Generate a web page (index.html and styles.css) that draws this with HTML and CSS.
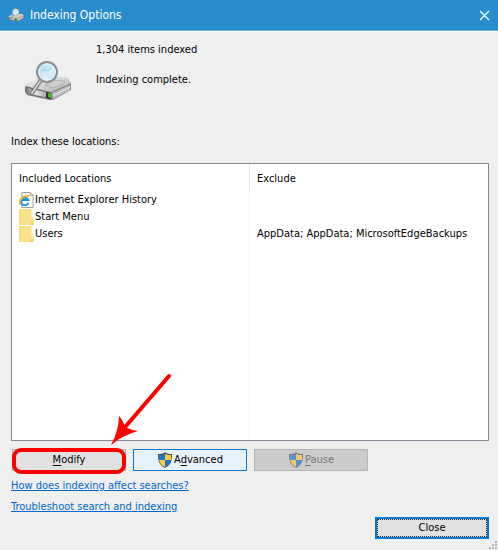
FILE: index.html
```html
<!DOCTYPE html>
<html lang="en">
<head>
    <meta charset="UTF-8">
    <meta name="viewport" content="width=device-width, initial-scale=1.0">
    <title>Indexing Options</title>
    <link rel="stylesheet" href="styles.css">
</head>
<body>
    <svg width="0" height="0" class="symbols" aria-hidden="true">
        <defs>
            <linearGradient id="metal" x1="0" y1="0" x2="1" y2="1">
                <stop offset="0" stop-color="#fafafa"/>
                <stop offset="1" stop-color="#adadad"/>
            </linearGradient>
            <linearGradient id="side" x1="0" y1="0" x2="1" y2="0">
                <stop offset="0" stop-color="#777"/>
                <stop offset="0.4" stop-color="#e4e4e4"/>
                <stop offset="1" stop-color="#888"/>
            </linearGradient>
            <linearGradient id="lens" x1="0" y1="0" x2="1" y2="1">
                <stop offset="0" stop-color="#a9d8f3"/>
                <stop offset="0.6" stop-color="#d9f0fc"/>
                <stop offset="1" stop-color="#b4dcf2"/>
            </linearGradient>
        </defs>
        <symbol id="drive" viewBox="0 0 48 40">
            <path d="M1 25 L17 16 L43 17 L47 22 L47 29 L29 39 L25 39 L3 34 L1 31 Z" fill="#8a8a8a"/>
            <path d="M1 25 L17 16 L43 17 L47 22 L27 31 Z" fill="url(#metal)"/>
            <path d="M21 24 L30 19 L40 20 L41 22 L29 27 Z" fill="#cfcfcf" stroke="#b0b0b0"/>
            <path d="M2 26 L27 32 L27 38 L4 33 L2 31 Z" fill="url(#side)" stroke="#6c6c6c"/>
            <path d="M28 32 L46 24 L46 29 L29 38 Z" fill="#bdbdbd"/>
            <path d="M29 35 L46 26" stroke="#eee"/>
            <path d="M22 31 L27 32 L27 38 L22 37 Z" fill="#333"/>
            <path d="M24 32 L27 32 L27 37 L24 36 Z" fill="#35c30b"/>
            <path d="M17 19 L8 32" stroke="#777" stroke-width="4" stroke-linecap="round"/>
            <path d="M17 19 L8 32" stroke="#d0d0d0" stroke-width="2" stroke-linecap="round"/>
            <circle cx="23" cy="11" r="10" fill="url(#lens)" stroke="#8b8f94" stroke-width="2"/>
            <circle cx="23" cy="11" r="8" fill="none" stroke="#eaf7fd"/>
            <path d="M17 10 L20 8 L23 10 L28 7" fill="none" stroke="#9fd0ee"/>
        </symbol>
        <symbol id="folder" viewBox="0 0 14 16">
            <path d="M0 0 H12 V8 L14 10 V16 H0 Z" fill="#fde08a"/>
            <path d="M0 0 H1 V16 H0 Z M11 9 H14 V16 H11 Z" fill="#f5cd5c"/>
            <path d="M11 9 L14 9 V12 L12 14 Z" fill="#fbe9ae"/>
        </symbol>
        <symbol id="shield" viewBox="0 0 16 16">
            <path d="M8 0 C10 2 12 2 15 2 C15 9 14 13 8 16 C2 13 1 9 1 2 C4 2 6 2 8 0 Z" fill="#4c4f54"/>
            <path d="M8 2 V8 H2 C2 6 2 5 2 3 C4 3 6 3 8 2 Z" fill="#1976cf"/>
            <path d="M8 2 C10 3 12 3 14 3 C14 5 14 6 14 8 H8 Z" fill="#ffcb3a"/>
            <path d="M2 8 H8 V15 C4 13 3 11 2 8 Z" fill="#ffcb3a"/>
            <path d="M8 8 H14 C13 11 12 13 8 15 Z" fill="#1976cf"/>
        </symbol>
    </svg>

    <div class="dialog">
        <header class="titlebar">
            <svg class="titlebar-icon" aria-hidden="true"><use href="#drive"/></svg>
            <h1 class="title">Indexing Options</h1>
            <button type="button" class="window-close" aria-label="Close window">
                <svg width="11" height="11" viewBox="0 0 11 11"><path d="M1 1 L10 10 M10 1 L1 10" stroke="#fff" stroke-width="1.2"/></svg>
            </button>
        </header>

        <main class="content">
            <section class="status">
                <svg class="status-icon" aria-hidden="true"><use href="#drive"/></svg>
                <div class="status-text">
                    <p>1,304 items indexed</p>
                    <p>Indexing complete.</p>
                </div>
            </section>

            <h2 class="list-label" id="locations-label">Index these locations:</h2>
            <div class="list-box">
                <table class="locations" aria-labelledby="locations-label">
                    <thead>
                        <tr><th>Included Locations</th><th>Exclude</th></tr>
                    </thead>
                    <tbody>
                        <tr>
                            <td>
                                <div class="place">
                                    <svg class="place-icon" viewBox="0 0 16 16" aria-hidden="true">
                                        <path d="M3 0 H12 L15 3 V16 H3 Z" fill="#fff" stroke="#999"/>
                                        <path d="M12 0 V3 H15" fill="#e8e8e8" stroke="#999"/>
                                        <path d="M10 11 A4 4 0 1 1 10 8 H3" fill="none" stroke="#1b8fe0" stroke-width="2"/>
                                        <path d="M1 13 C-1 8 5 2 11 4" fill="none" stroke="#f5b722" stroke-width="2"/>
                                    </svg>
                                    <span>Internet Explorer History</span>
                                </div>
                            </td>
                            <td></td>
                        </tr>
                        <tr>
                            <td><div class="place"><svg class="place-icon" aria-hidden="true"><use href="#folder"/></svg><span>Start Menu</span></div></td>
                            <td></td>
                        </tr>
                        <tr>
                            <td><div class="place"><svg class="place-icon" aria-hidden="true"><use href="#folder"/></svg><span>Users</span></div></td>
                            <td>AppData; AppData; MicrosoftEdgeBackups</td>
                        </tr>
                    </tbody>
                </table>
                <div class="list-fill"><span></span><span></span></div>
            </div>

            <div class="actions">
                <div class="marked">
                    <button type="button" class="button"><span><u>M</u>odify</span></button>
                    <span class="ring"></span>
                    <svg class="arrow" width="64" height="74" viewBox="0 0 64 74" aria-hidden="true">
                        <path d="M59 3 L16 53" stroke="#f00" stroke-width="4" stroke-linecap="round"/>
                        <path d="M1 72 Q9 57 9 43 Q13 47 15 54 Q21 57 28 58 Q13 62 1 72 Z" fill="#f00"/>
                    </svg>
                </div>
                <button type="button" class="button button-hot"><svg class="shield" aria-hidden="true"><use href="#shield"/></svg><span>A<u>d</u>vanced</span></button>
                <button type="button" class="button" disabled><svg class="shield" aria-hidden="true"><use href="#shield"/></svg><span><u>P</u>ause</span></button>
            </div>

            <nav class="links">
                <a href="#">How does indexing affect searches?</a>
                <a href="#">Troubleshoot search and indexing</a>
            </nav>

            <footer class="footer">
                <button type="button" class="button button-default"><span>Close</span></button>
            </footer>
        </main>

        <svg class="grip" width="8" height="8" viewBox="0 0 8 8" aria-hidden="true">
            <path d="M6 0h2v2h-2z M3 3h2v2h-2z M6 3h2v2h-2z M0 6h2v2h-2z M3 6h2v2h-2z M6 6h2v2h-2z" fill="#b8b8b8"/>
        </svg>
    </div>
</body>
</html>
```

FILE: styles.css
```css
* {
    box-sizing: border-box;
}

body {
    margin: 0;
    background: #efefef;
    color: #000;
    font-family: Tahoma, "DejaVu Sans Condensed", "Noto Sans", sans-serif;
    font-size: 11px;
    line-height: 16px;
}

.symbols {
    position: absolute;
}

.dialog {
    position: relative;
    display: flex;
    flex-direction: column;
    min-height: 100vh;
}

.titlebar {
    display: flex;
    align-items: center;
    gap: 6px;
    height: 31px;
    padding: 0 8px;
    background: #288dcd;
    border-bottom: 1px solid #67afdc;
    color: #fff;
}

.titlebar-icon {
    width: 16px;
    height: 14px;
}

.title {
    flex: 1;
    margin: 0;
    font-size: 12px;
    font-weight: normal;
}

.window-close {
    display: flex;
    padding: 0;
    background: none;
    border: none;
    cursor: pointer;
}

.content {
    flex: 1;
    display: flex;
    flex-direction: column;
    padding: 10px 9px 11px 11px;
    border-top: 1px solid #fff;
}

.status {
    display: flex;
    align-items: flex-start;
    gap: 24px;
    padding-left: 13px;
}

.status-icon {
    width: 48px;
    height: 40px;
    margin-top: 19px;
}

.status-text {
    display: flex;
    flex-direction: column;
    gap: 14px;
}

.status-text p {
    margin: 0;
}

.list-label {
    margin: 33px 0 13px;
    font-size: 11px;
    font-weight: normal;
}

.list-box {
    flex: 1;
    display: flex;
    flex-direction: column;
    background: #fff;
    border: 1px solid #868a96;
}

.locations {
    width: 100%;
    table-layout: fixed;
    border-spacing: 0;
}

.locations th {
    height: 27px;
    padding: 2px 7px 0;
    border-right: 1px solid #e6e6e6;
    font-weight: normal;
    text-align: left;
}

.locations td {
    height: 17px;
    padding: 0 7px;
    border-right: 1px solid #f0f7fc;
    white-space: nowrap;
}

.locations td:last-child,
.locations th:last-child {
    border-right: none;
}

.place {
    display: flex;
    align-items: center;
    gap: 1px;
    height: 17px;
}

.place-icon {
    width: 15px;
    height: 16px;
}

.list-fill {
    flex: 1;
    display: grid;
    grid-template-columns: 1fr 1fr;
}

.list-fill span:first-child {
    border-right: 1px solid #f0f7fc;
}

.actions {
    display: flex;
    gap: 7px;
    margin-top: 8px;
    padding-left: 1px;
}

.marked {
    position: relative;
    display: flex;
}

.button {
    display: flex;
    align-items: center;
    justify-content: center;
    gap: 1px;
    width: 114px;
    height: 22px;
    padding: 0;
    background: #e1e1e1;
    border: 1px solid #adadad;
    color: #000;
    font: inherit;
    cursor: pointer;
}

.button u {
    text-underline-offset: 2px;
}

.button-hot {
    background: #e5f1fb;
    border-color: #0078d7;
}

.button:disabled {
    background: #ccc;
    border-color: #b5b5b5;
    color: #777;
    cursor: default;
}

.button:disabled .shield {
    opacity: 0.65;
}

.button-default {
    border: 2px solid #0078d7;
    outline: 1px dotted #222;
    outline-offset: -3px;
}

.shield {
    width: 16px;
    height: 16px;
}

/* highlight around the Modify button */
.ring {
    position: absolute;
    inset: -1px 0 -3px;
    border: 4px solid #f00;
    border-radius: 9px;
    pointer-events: none;
}

.arrow {
    position: absolute;
    left: 98px;
    bottom: 24px;
    pointer-events: none;
}

.links {
    display: flex;
    flex-direction: column;
    align-items: flex-start;
    gap: 5px;
    margin-top: 7px;
}

.links a {
    color: #0066cc;
}

.footer {
    display: flex;
    justify-content: flex-end;
    margin-top: 2px;
}

.grip {
    position: absolute;
    right: 1px;
    bottom: 1px;
}
```
